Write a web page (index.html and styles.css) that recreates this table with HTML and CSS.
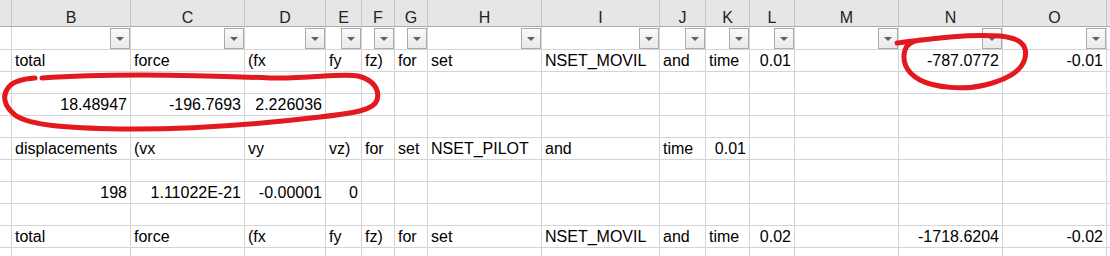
FILE: index.html
```html
<!DOCTYPE html>
<html lang="en">
<head>
<meta charset="utf-8">
<title>Sheet1</title>
<link rel="stylesheet" href="styles.css">
</head>
<body>
<div class="sheet">
  <div class="row head">
    <div class="c"></div><div class="c">B</div><div class="c">C</div><div class="c">D</div><div class="c">E</div><div class="c">F</div><div class="c">G</div><div class="c">H</div><div class="c">I</div><div class="c">J</div><div class="c">K</div><div class="c">L</div><div class="c">M</div><div class="c">N</div><div class="c">O</div><div class="c"></div>
  </div>
  <div class="row filters">
    <div class="c"></div>
    <div class="c"><span class="dd"></span></div><div class="c"><span class="dd"></span></div><div class="c"><span class="dd"></span></div><div class="c"><span class="dd"></span></div><div class="c"><span class="dd"></span></div><div class="c"><span class="dd"></span></div><div class="c"><span class="dd"></span></div><div class="c"><span class="dd"></span></div><div class="c"><span class="dd"></span></div><div class="c"><span class="dd"></span></div><div class="c"><span class="dd"></span></div><div class="c"><span class="dd"></span></div><div class="c"><span class="dd"></span></div><div class="c"><span class="dd"></span></div>
    <div class="c"></div>
  </div>
  <div class="row">
    <div class="c"></div><div class="c">total</div><div class="c">force</div><div class="c">(fx</div><div class="c">fy</div><div class="c">fz)</div><div class="c">for</div><div class="c">set</div><div class="c">NSET_MOVIL</div><div class="c">and</div><div class="c">time</div><div class="c n">0.01</div><div class="c"></div><div class="c n">-787.0772</div><div class="c n">-0.01</div><div class="c"></div>
  </div>
  <div class="row">
    <div class="c"></div><div class="c"></div><div class="c"></div><div class="c"></div><div class="c"></div><div class="c"></div><div class="c"></div><div class="c"></div><div class="c"></div><div class="c"></div><div class="c"></div><div class="c"></div><div class="c"></div><div class="c"></div><div class="c"></div><div class="c"></div>
  </div>
  <div class="row">
    <div class="c"></div><div class="c n">18.48947</div><div class="c n">-196.7693</div><div class="c n">2.226036</div><div class="c"></div><div class="c"></div><div class="c"></div><div class="c"></div><div class="c"></div><div class="c"></div><div class="c"></div><div class="c"></div><div class="c"></div><div class="c"></div><div class="c"></div><div class="c"></div>
  </div>
  <div class="row">
    <div class="c"></div><div class="c"></div><div class="c"></div><div class="c"></div><div class="c"></div><div class="c"></div><div class="c"></div><div class="c"></div><div class="c"></div><div class="c"></div><div class="c"></div><div class="c"></div><div class="c"></div><div class="c"></div><div class="c"></div><div class="c"></div>
  </div>
  <div class="row">
    <div class="c"></div><div class="c">displacements</div><div class="c">(vx</div><div class="c">vy</div><div class="c">vz)</div><div class="c">for</div><div class="c">set</div><div class="c">NSET_PILOT</div><div class="c">and</div><div class="c">time</div><div class="c n">0.01</div><div class="c"></div><div class="c"></div><div class="c"></div><div class="c"></div><div class="c"></div>
  </div>
  <div class="row">
    <div class="c"></div><div class="c"></div><div class="c"></div><div class="c"></div><div class="c"></div><div class="c"></div><div class="c"></div><div class="c"></div><div class="c"></div><div class="c"></div><div class="c"></div><div class="c"></div><div class="c"></div><div class="c"></div><div class="c"></div><div class="c"></div>
  </div>
  <div class="row">
    <div class="c"></div><div class="c n">198</div><div class="c n">1.11022E-21</div><div class="c n">-0.00001</div><div class="c n">0</div><div class="c"></div><div class="c"></div><div class="c"></div><div class="c"></div><div class="c"></div><div class="c"></div><div class="c"></div><div class="c"></div><div class="c"></div><div class="c"></div><div class="c"></div>
  </div>
  <div class="row">
    <div class="c"></div><div class="c"></div><div class="c"></div><div class="c"></div><div class="c"></div><div class="c"></div><div class="c"></div><div class="c"></div><div class="c"></div><div class="c"></div><div class="c"></div><div class="c"></div><div class="c"></div><div class="c"></div><div class="c"></div><div class="c"></div>
  </div>
  <div class="row">
    <div class="c"></div><div class="c">total</div><div class="c">force</div><div class="c">(fx</div><div class="c">fy</div><div class="c">fz)</div><div class="c">for</div><div class="c">set</div><div class="c">NSET_MOVIL</div><div class="c">and</div><div class="c">time</div><div class="c n">0.02</div><div class="c"></div><div class="c n">-1718.6204</div><div class="c n">-0.02</div><div class="c"></div>
  </div>
  <div class="row">
    <div class="c"></div><div class="c"></div><div class="c"></div><div class="c"></div><div class="c"></div><div class="c"></div><div class="c"></div><div class="c"></div><div class="c"></div><div class="c"></div><div class="c"></div><div class="c"></div><div class="c"></div><div class="c"></div><div class="c"></div><div class="c"></div>
  </div>

  <!-- hand-drawn red markers circling the values of interest -->
  <svg class="ink" width="1110" height="256" viewBox="0 0 1110 256" aria-hidden="true">
    <path d="M 42 78 C 110 73, 200 75, 270 78 C 310 79, 340 73, 358 76 C 374 80, 380 90, 377 100 C 374 110, 355 113, 320 117 C 260 124, 190 130, 120 129 C 70 128, 30 126, 15 115 C 4 106, 2 96, 8 88 C 12 82, 20 79, 35 78"/>
    <path d="M 897 43 C 930 39, 960 34, 1000 36 C 1020 38, 1028 45, 1025 58 C 1022 72, 1005 80, 985 85 C 965 90, 935 88, 920 80 C 905 72, 902 60, 905 50 C 907 44, 912 41, 920 40"/>
  </svg>
</div>
</body>
</html>
```

FILE: styles.css
```css
html, body {
  margin: 0;
  padding: 0;
  background: #ffffff;
  overflow: hidden;
}

.sheet {
  position: relative;
  width: 1110px;
  height: 256px;
  overflow: hidden;
  font-family: "Liberation Sans", Arial, sans-serif;
  font-size: 16px;
  color: #000000;
}

.row {
  display: grid;
  grid-template-columns: 12px 119px 114px 81px 36px 33px 33px 114px 118px 46px 44px 45px 104px 104px 104px 60px;
  height: 22px;
}

.c {
  box-sizing: border-box;
  border-right: 1px solid #d4d4d4;
  border-bottom: 1px solid #d4d4d4;
  padding: 0 3px;
  line-height: 21px;
  white-space: nowrap;
  overflow: hidden;
}

.c.n {
  text-align: right;
}

/* column letters */
.head {
  height: 27px;
  background: #e6e6e6;
}

.head .c {
  border-right-color: #c6c6c6;
  border-bottom-color: #ababab;
  padding-top: 9px;
  line-height: 18px;
  text-align: center;
  color: #222222;
}

/* autofilter row */
.filters {
  height: 23px;
}

.filters .c {
  display: flex;
  justify-content: flex-end;
  align-items: flex-start;
  padding: 1px 0 0 0;
}

.dd {
  box-sizing: border-box;
  width: 20px;
  height: 21px;
  border: 1px solid #ababab;
  background: linear-gradient(#fafafa, #e9e9e9);
  display: flex;
  align-items: center;
  justify-content: center;
}

.dd::after {
  content: "";
  width: 0;
  height: 0;
  border-left: 4px solid transparent;
  border-right: 4px solid transparent;
  border-top: 4px solid #5f5f5f;
  margin-top: 1px;
}

.ink {
  position: absolute;
  left: 0;
  top: 0;
  pointer-events: none;
}

.ink path {
  fill: none;
  stroke: #e3191f;
  stroke-width: 5;
  stroke-linecap: round;
  stroke-linejoin: round;
}
```
